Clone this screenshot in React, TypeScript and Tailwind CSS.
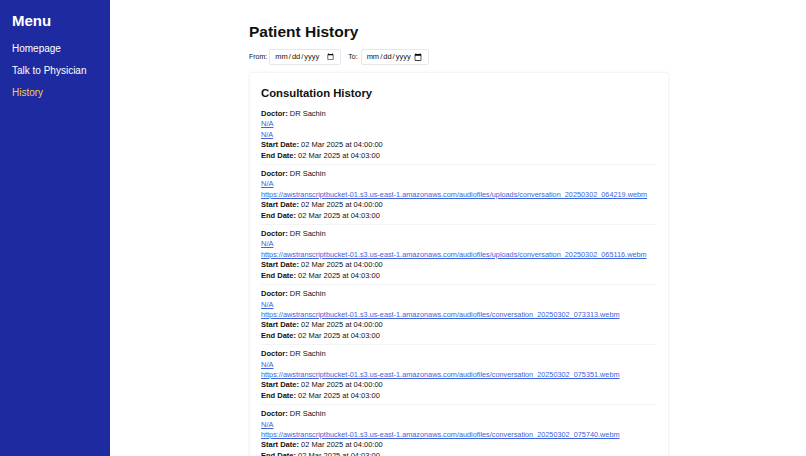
import React from "react";

interface Consultation {
  doctor: string;
  summary: string;
  audio: string;
  start: string;
  end: string;
}

const BASE = "https://awstranscriptbucket-01.s3.us-east-1.amazonaws.com/audiofiles/";

const consultations: Consultation[] = [
  { doctor: "DR Sachin", summary: "N/A", audio: "N/A", start: "02 Mar 2025 at 04:00:00", end: "02 Mar 2025 at 04:03:00" },
  { doctor: "DR Sachin", summary: "N/A", audio: BASE + "uploads/conversation_20250302_064219.webm", start: "02 Mar 2025 at 04:00:00", end: "02 Mar 2025 at 04:03:00" },
  { doctor: "DR Sachin", summary: "N/A", audio: BASE + "uploads/conversation_20250302_065116.webm", start: "02 Mar 2025 at 04:00:00", end: "02 Mar 2025 at 04:03:00" },
  { doctor: "DR Sachin", summary: "N/A", audio: BASE + "conversation_20250302_073313.webm", start: "02 Mar 2025 at 04:00:00", end: "02 Mar 2025 at 04:03:00" },
  { doctor: "DR Sachin", summary: "N/A", audio: BASE + "conversation_20250302_075351.webm", start: "02 Mar 2025 at 04:00:00", end: "02 Mar 2025 at 04:03:00" },
  { doctor: "DR Sachin", summary: "N/A", audio: BASE + "conversation_20250302_075740.webm", start: "02 Mar 2025 at 04:00:00", end: "02 Mar 2025 at 04:03:00" },
];

const Sidebar = () => (
  <aside className="w-[110px] shrink-0 h-screen bg-[#1e2ba0] text-white px-3 pt-[11px]">
    <h2 className="text-[15px] font-bold leading-[20px] mb-[11px]">Menu</h2>
    <nav className="flex flex-col gap-[8px] text-[10px] leading-[14px]">
      <a className="text-white">Homepage</a>
      <a className="text-white">Talk to Physician</a>
      <a className="text-[#f2cc4f]">History</a>
    </nav>
  </aside>
);

export default function App() {
  return (
    <div className="flex h-screen overflow-hidden bg-white font-['Liberation_Sans',Arial,sans-serif] text-[#111]">
      <Sidebar />
      <main className="flex-1 overflow-hidden">
        <div className="w-[420px] ml-[139px] pt-[22px]">
          <h1 className="text-[15.5px] font-bold leading-[20px] mb-[7px]">Patient History</h1>

          {/* Date filters */}
          <div className="flex items-center text-[7px] mb-[7px]">
            <label className="mr-[2px]">From:</label>
            <input
              type="date"
              className="h-[16px] w-[72px] px-[4px] border border-gray-200 rounded-[2px] text-[7.5px]"
            />
            <label className="ml-[7px] mr-[3px]">To:</label>
            <input
              type="date"
              className="h-[16px] w-[68px] px-[4px] border border-gray-200 rounded-[2px] text-[7.5px]"
            />
          </div>

          {/* Consultation card */}
          <div className="border border-gray-100 rounded-[3px] shadow-[0_0_3px_rgba(0,0,0,0.05)] px-[11px] pt-[12px]">
            <h2 className="text-[11.3px] font-bold leading-[16px] mb-[8px]">Consultation History</h2>
            <ul>
              {consultations.map((c, i) => (
                <li
                  key={i}
                  className="text-[7.5px] leading-[10.4px] pb-[3px] pt-[4px] first:pt-0 border-b border-gray-100"
                >
                  <div>
                    <span className="font-bold">Doctor:</span> {c.doctor}
                  </div>
                  <div>
                    <a className="text-[#3d63dd] underline">{c.summary}</a>
                  </div>
                  <div className="whitespace-nowrap text-[7.3px]">
                    <a className="text-[#3d63dd] underline">{c.audio}</a>
                  </div>
                  <div>
                    <span className="font-bold">Start Date:</span> {c.start}
                  </div>
                  <div>
                    <span className="font-bold">End Date:</span> {c.end}
                  </div>
                </li>
              ))}
            </ul>
          </div>
        </div>
      </main>
    </div>
  );
}
